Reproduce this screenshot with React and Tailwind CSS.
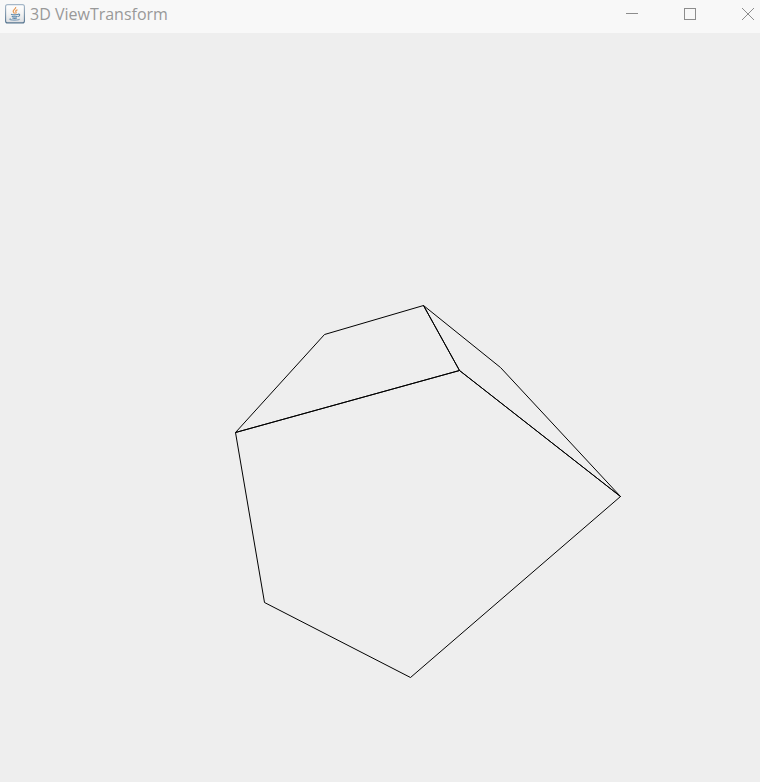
const faces = [
  "235.5,432.5 324.5,334.5 423.5,305.5 459.5,370.5",
  "423.5,305.5 500.5,367.5 620.5,496.5 459.5,370.5",
  "235.5,432.5 459.5,370.5 620.5,496.5 410.5,677.5 264.5,602.5",
];

function JavaIcon() {
  return (
    <svg className="block shrink-0" width="20" height="20" viewBox="0 0 20 20" fill="none">
      <defs>
        <linearGradient id="frame" x1="0" y1="0" x2="0" y2="1">
          <stop offset="0" stopColor="#a5b7c8" />
          <stop offset="1" stopColor="#55748f" />
        </linearGradient>
        <linearGradient id="face" x1="0" y1="0" x2="0" y2="1">
          <stop offset="0" stopColor="#ffffff" />
          <stop offset="0.5" stopColor="#f4f4f4" />
          <stop offset="1" stopColor="#dcdee1" />
        </linearGradient>
      </defs>
      <rect x="0.6" y="0.6" width="18.8" height="18.3" rx="2" fill="url(#face)" stroke="url(#frame)" strokeWidth="1.1" />
      <path d="M10.7 3c.5 2-3 2.800-2.500 4.600.2.800 1.100 1.200 1.300 2M12.500 5.700c-1.500.7-2.200 1.300-1.500 2.300.3.600.1 1.100-.5 1.600" stroke="#e6954f" strokeWidth="1.200" />
      <path d="M6 10.300c1.500.6 5 .6 7.200 0M6.700 12.300c1.600.6 4.200.6 5.900 0M7.300 14c1.400.5 3.400.5 4.700 0M13 10.200c2.300-.5 2.200 1.600.1 2.400" stroke="#5c87aa" strokeWidth="1.100" />
      <path d="M5.500 14.600c-3.200 1.200 2.800 1.700 6 1.400 2-.1 3.500-.6 3-1.100" stroke="#6c91b0" strokeWidth="1" />
    </svg>
  );
}

export default function App() {
  return (
    <div className="flex h-[782px] w-[760px] flex-col overflow-hidden bg-[#eeeeee]">
      <header className="flex h-[33px] shrink-0 items-start bg-[#f8f8f8] pl-[5px]">
        <div className="pt-1">
          <JavaIcon />
        </div>
        <h1 className="ml-[5px] pt-[3px] font-['Open_Sans','Noto_Sans',sans-serif] text-[16px] leading-[23px] font-normal whitespace-nowrap text-[#999999]">
          3D ViewTransform
        </h1>
        <div className="ml-auto flex gap-[46px] pt-2 pr-[6px] text-[#8c8c8c]">
          <svg width="12" height="12" viewBox="0 0 12 12" stroke="currentColor">
            <path d="M0 5.500H12" />
          </svg>
          <svg width="12" height="12" viewBox="0 0 12 12" fill="none" stroke="currentColor">
            <rect x="0.5" y="0.5" width="11" height="11" />
          </svg>
          <svg width="12" height="12" viewBox="0 0 12 12" stroke="currentColor">
            <path d="M0 0L12 12M12 0L0 12" />
          </svg>
        </div>
      </header>
      <main className="h-[749px]">
        <svg className="block" width="760" height="749" viewBox="0 33 760 749" fill="none" stroke="black">
          {faces.map((points) => (
            <polygon key={points} points={points} />
          ))}
        </svg>
      </main>
    </div>
  );
}
